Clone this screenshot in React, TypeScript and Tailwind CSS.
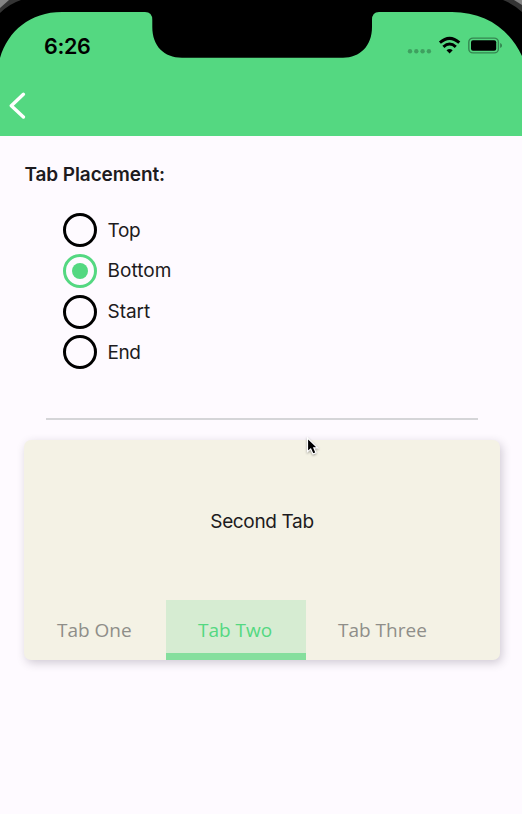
const placements = ['Top', 'Bottom', 'Start', 'End'];
const tracking = ['tracking-[-0.3px]', 'tracking-[0.05px]', 'tracking-[-0.05px]', 'tracking-[-0.4px]'];

function PhoneBezel() {
  return (
    <svg className="absolute inset-0" width="522" height="136" viewBox="0 0 522 136" aria-hidden="true">
      <path
        d="M0 0H522V56C509 28 484 12 452 12H379Q372 12 372 20V27C372 46 360 57.7 343 57.7H182C164 57.7 152.300 46 152.300 27V20Q152.300 12 145 12H62C30 12 8 31 0 58Z"
        fill="#000"
      />
      <path d="M0 0H21Q9 4 0 13Z" fill="#343434" />
      <path d="M0 0H9L0 8Z" fill="#858585" />
      <path d="M503 0H522V12Q513 4 503 0Z" fill="#343434" />
      <path d="M514 0H522V5Z" fill="#858585" />
    </svg>
  );
}

function StatusIcons() {
  return (
    <svg width="96" height="20" viewBox="406 35 96 20" aria-hidden="true">
      <g fill="#000" fillOpacity=".26">
        <circle cx="410" cy="51.200" r="2.200" />
        <circle cx="416.300" cy="51.200" r="2.200" />
        <circle cx="422.600" cy="51.200" r="2.200" />
        <circle cx="428.900" cy="51.200" r="2.200" />
      </g>
      <g fill="none" stroke="#000" strokeWidth="3">
        <path d="M439.900 42.700Q449.600 34.100 459.300 42.700" />
        <path d="M443.400 46.800Q449.600 41.200 455.800 46.800" />
      </g>
      <path d="M446.500 50.200Q449.600 47.600 452.700 50.200L449.600 53.400Z" fill="#000" />
      <rect x="468.800" y="38.100" width="29.600" height="14.800" rx="4.200" fill="none" stroke="#000" strokeOpacity=".38" strokeWidth="1.400" />
      <rect x="471" y="40.200" width="25.200" height="10.600" rx="2" fill="#000" />
      <path d="M500.200 43V48Q502 47.300 502 45.500T500.200 43Z" fill="#000" fillOpacity=".42" />
    </svg>
  );
}

function Radio({ checked }: { checked: boolean }) {
  return (
    <span
      className={`flex h-[34px] w-[34px] items-center justify-center rounded-full border-[3px] ${checked ? 'border-[#54d881]' : 'border-black'}`}
    >
      {checked && <span className="h-4 w-4 rounded-full bg-[#54d881]" />}
    </span>
  );
}

export default function App() {
  return (
    <main className="relative h-[814px] w-[522px] overflow-hidden bg-[#fefaff] font-['Inter',sans-serif] text-[#1d1b20]">
      <header className="relative h-[136px] bg-[#54d881]">
        <PhoneBezel />
        <div className="relative flex h-[92px] items-start justify-between pt-[35px] pr-5 pl-11">
          <span className="text-[21.500px] leading-[22px] font-semibold tracking-[-0.3px] text-black">6:26</span>
          <StatusIcons />
        </div>
        <svg className="relative ml-2" width="20" height="28" viewBox="8 92 20 28" aria-label="Back">
          <path d="M23.400 94.300L11.300 105.800L23.400 117" fill="none" stroke="white" strokeWidth="3.400" strokeLinecap="round" strokeLinejoin="round" />
        </svg>
      </header>

      <section className="pt-[27px] pl-[24.500px]">
        <h1 className="text-[19px] leading-6 font-semibold tracking-[-0.1px]">Tab Placement:</h1>
        <div className="mt-[26px] flex flex-col gap-[6.800px] pl-[38px]" role="radiogroup">
          {placements.map((label, i) => (
            <div key={label} role="radio" aria-checked={i === 1} className="flex h-[34px] items-center gap-[11px]">
              <Radio checked={i === 1} />
              <span className={`pt-px text-[19px] leading-6 ${tracking[i]}`}>{label}</span>
            </div>
          ))}
        </div>
      </section>

      <div className="mt-[48.500px] mr-11 ml-[46px] h-[2px] bg-[#d5d5d8]" />

      <section className="mt-[20px] ml-6 flex h-[220px] w-[476px] flex-col rounded-[7px] bg-[#f4f2e5] shadow-[2px_3px_10px_rgba(45,35,60,0.22)]">
        <div className="flex h-40 items-center justify-center pt-1">
          <span className="text-[19px] leading-6 tracking-[-0.350px]">Second Tab</span>
        </div>
        <div className="flex h-[60px] pl-[1.500px] font-['Open_Sans',sans-serif] text-[19px] text-[#8f8e89]" role="tablist">
          <div className="flex w-[140px] items-center pt-px pl-[31.500px]">Tab One</div>
          <div className="flex w-[140px] items-center border-b-[7px] border-[#85df9d] bg-[#d6ecd2] pt-2 pl-[32.500px] text-[#54d881]">Tab Two</div>
          <div className="flex items-center pt-px pl-[32.500px]">Tab Three</div>
        </div>
      </section>

      <svg className="absolute top-[436px] left-[305px] drop-shadow-[0_1px_1px_rgba(0,0,0,0.35)]" width="16" height="22" viewBox="0 0 16 22" aria-hidden="true">
        <path d="M2.500 2V15.700L5.700 12.900L8 18L11 16.700L8.800 11.800H12.700Z" fill="#000" stroke="#fff" strokeWidth="1.200" />
      </svg>
    </main>
  );
}
